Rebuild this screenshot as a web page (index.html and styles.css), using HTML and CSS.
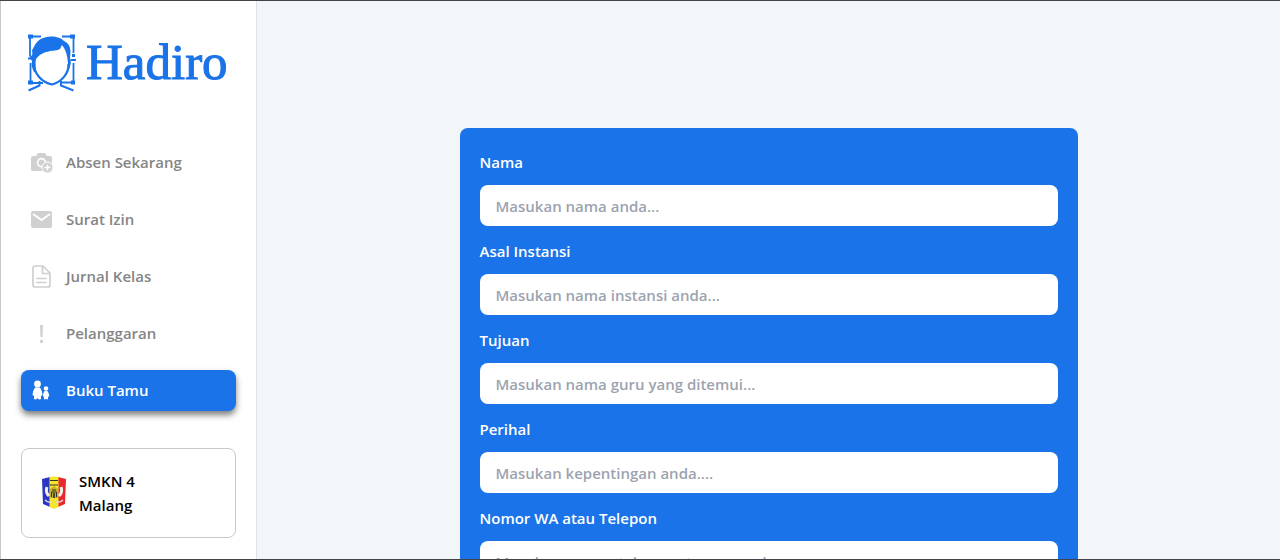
FILE: index.html
```html
<!DOCTYPE html>
<html lang="id">
<head>
<meta charset="utf-8">
<meta name="viewport" content="width=device-width, initial-scale=1">
<title>Hadiro - Buku Tamu</title>
<link rel="stylesheet" href="styles.css">
</head>
<body>
<div class="app">
  <aside class="sidebar">
    <a class="brand" href="#">
      <svg class="brand-mark" viewBox="0 0 56 66" aria-hidden="true">
        <g fill="none" stroke="#1a73e8" stroke-width="1.800">
          <path d="M17 7.500H6V27M6.500 34V54H19M38 7.500H49.500V24M49.500 34V53.500H37"/>
          <path d="M15.500 52V56.500L4.500 61.500M37 52V56.500L49.500 61.500" stroke-width="2"/>
          <path d="M10 35C10 44 17 53 28 55.500C38 53 45 44 44.500 35" stroke-width="2.200"/>
        </g>
        <path fill="#1a73e8" d="M10 43C8 39 7 36 8 32L5 27C8 28 9 26 8 21C10 19 10 16 14 12C20 6 35 6 40 12C47 15 47 22 46 29C48 33 46 39 43.500 43C45 32 43 22 38 16L36 20C30 23 20 20 12 30C11 34 12 38 12 43Z"/>
        <g fill="#1a73e8"><path d="M4 5.500h5v4H4zM46 5.500h5v4h-5zM4 51.500h5v4H4zM47 51.500h4v4h-4zM48 25h3v3h-3zM47 30h5v2h-5zM4 28.500h4v2H4z"/></g>
      </svg>
      <span class="brand-name">Hadiro</span>
    </a>
    <nav class="menu">
      <a class="menu-link" href="#">
        <svg class="icon" viewBox="0 0 24 24" aria-hidden="true">
          <path fill="currentColor" d="M3 5H6L8 2H15L17 5H20Q22 5 22 7V13A6 6 0 0 0 14 20H3Q1 20 1 18V7Q1 5 3 5Z"/>
          <path fill="none" stroke="#fff" stroke-width="1.600" d="M12.500 15.500A4 4 0 1 1 15.500 11.500"/>
          <circle cx="17.500" cy="16.500" r="5.500" fill="currentColor" stroke="#fff"/>
          <path stroke="#fff" stroke-width="1.500" d="M17.500 13.500V19.500M14.500 16.500H20.500"/>
        </svg>
        Absen Sekarang
      </a>
      <a class="menu-link" href="#">
        <svg class="icon" viewBox="0 0 24 24" aria-hidden="true">
          <rect x="1" y="3" width="21" height="17" rx="2" fill="currentColor"/>
          <path fill="none" stroke="#fff" stroke-width="2" d="M3 6L11.500 12L20 6"/>
        </svg>
        Surat Izin
      </a>
      <a class="menu-link" href="#">
        <svg class="icon" viewBox="0 0 24 24" aria-hidden="true">
          <path fill="none" stroke="currentColor" stroke-width="1.700" stroke-linejoin="round" stroke-linecap="round" d="M5 1H13L20 8V20Q20 22 18 22H5Q3 22 3 20V3Q3 1 5 1ZM12.500 1.500V8.500H19.500M7 13.500H16M7 17.500H16"/>
        </svg>
        Jurnal Kelas
      </a>
      <a class="menu-link" href="#">
        <svg class="icon" viewBox="0 0 24 24" aria-hidden="true">
          <path fill="currentColor" d="M10 3H13L12.500 15H10.500Z"/>
          <circle cx="11.500" cy="19.500" r="1.700" fill="currentColor"/>
        </svg>
        Pelanggaran
      </a>
      <a class="menu-link active" href="#" aria-current="page">
        <svg class="icon" viewBox="0 0 24 24" aria-hidden="true">
          <g fill="currentColor">
            <circle cx="7.500" cy="5" r="3.400"/>
            <path d="M5 8.500H10Q12 11 12.500 16L11 17V20Q9 21 8 19.500H7Q6 21 4 20V17L2.500 16Q3 11 5 8.500Z"/>
            <circle cx="16" cy="9.500" r="2.300"/>
            <path d="M14.500 12H17.500Q19 14 19.300 17L18 18V20Q16.500 21 16 19.500Q15 21 14 20V18L12.900 17Q13 14 14.500 12Z"/>
          </g>
        </svg>
        Buku Tamu
      </a>
    </nav>
    <div class="school">
      <svg class="school-crest" viewBox="0 0 26 34" aria-hidden="true">
        <path fill="#2b35c4" d="M1 3L9 1V31L2 28Z"/>
        <path fill="#e8272f" d="M17 1L25 3L24 28L17 31Z"/>
        <path fill="#f3e532" d="M8.500 1Q13 0 17.500 1V31L13 33L8.500 31Z"/>
        <path fill="none" stroke="#f1eee5" stroke-width="3" d="M6 11Q4 16 8 20M20 11Q22 16 18 20"/>
        <path fill="none" stroke="#ded9d0" stroke-width="1.500" d="M4 24Q7 27 11 26M22 24Q19 27 15 26"/>
        <path fill="#c4b52d" d="M9 13L13 10L17 13V22H9Z"/>
        <path fill="none" stroke="#343126" d="M9 4.500H17M9 9H17M11 14H15M10.500 21V16H15.500V21"/>
        <path fill="#4c4730" d="M12 17H14V22H12Z"/>
      </svg>
      <span class="school-name">SMKN 4 Malang</span>
    </div>
  </aside>
  <main class="content">
    <form class="guest-form">
      <div class="field">
        <label for="nama">Nama</label>
        <input id="nama" type="text" placeholder="Masukan nama anda...">
      </div>
      <div class="field">
        <label for="instansi">Asal Instansi</label>
        <input id="instansi" type="text" placeholder="Masukan nama instansi anda...">
      </div>
      <div class="field">
        <label for="tujuan">Tujuan</label>
        <input id="tujuan" type="text" placeholder="Masukan nama guru yang ditemui...">
      </div>
      <div class="field">
        <label for="perihal">Perihal</label>
        <input id="perihal" type="text" placeholder="Masukan kepentingan anda....">
      </div>
      <div class="field">
        <label for="telepon">Nomor WA atau Telepon</label>
        <input id="telepon" type="tel" placeholder="Masukan nomor telepon atau wa anda">
      </div>
    </form>
  </main>
</div>
</body>
</html>
```
FILE: styles.css
```css
* {
  box-sizing: border-box;
}

body {
  margin: 0;
  font-family: "Open Sans", "Noto Sans", sans-serif;
  font-size: 15px;
  font-weight: 600;
  line-height: 24px;
}

.app {
  display: flex;
  height: 100vh;
  overflow: hidden;
  border-top: 1px solid #43444a;
  border-bottom: 1px solid #43444a;
  background: #f2f6f9;
}

.sidebar {
  flex: 0 0 257px;
  padding: 28px 20px 0;
  border-left: 1px solid #c8c8c8;
  border-right: 1px solid #dfe3e8;
  background: #fff;
}

.brand {
  display: flex;
  align-items: center;
  gap: 6px;
  padding-left: 3px;
  color: #1a73e8;
  text-decoration: none;
}

.brand-mark {
  flex: none;
  width: 56px;
  height: 66px;
}

.brand-name {
  font-family: "Liberation Serif", serif;
  font-size: 51px;
  font-weight: 400;
  line-height: 66px;
  -webkit-text-stroke: 1px #1a73e8;
}

.menu {
  display: flex;
  flex-direction: column;
  gap: 16px;
  margin-top: 47px;
}

.menu-link {
  display: flex;
  align-items: center;
  gap: 12px;
  padding: 8px 9px;
  border-radius: 8px;
  color: #858585;
  line-height: 25px;
  text-decoration: none;
}

.icon {
  flex: none;
  width: 24px;
  height: 24px;
  color: #d0d0d0;
}

.active {
  background: #1a73e8;
  color: #fff;
  box-shadow: 0 4px 6px rgba(0, 0, 0, 0.5);
}

.active .icon {
  color: #fff;
}

.school {
  display: flex;
  align-items: center;
  gap: 12px;
  margin-top: 37px;
  padding: 20px 19px;
  border: 1px solid #c9c9c9;
  border-radius: 8px;
  color: #000;
}

.school-crest {
  flex: none;
  width: 26px;
  height: 34px;
}

.school-name {
  max-width: 80px;
  line-height: 24px;
}

.content {
  flex: 1;
  min-width: 0;
  padding: 127px 24px 0;
}

.guest-form {
  display: flex;
  flex-direction: column;
  gap: 13px;
  max-width: 618px;
  margin: 0 auto;
  padding: 22px 20px 20px;
  border-radius: 8px;
  background: #1a73e8;
}

.field {
  display: flex;
  flex-direction: column;
  gap: 11px;
}

.field label {
  color: #fff;
}

.field input {
  width: 100%;
  height: 41px;
  padding: 8px 16px;
  border: 0;
  border-radius: 8px;
  background: #fff;
  color: #111827;
  font: inherit;
}

.field input::placeholder {
  color: #9ca3af;
  opacity: 1;
}
```
